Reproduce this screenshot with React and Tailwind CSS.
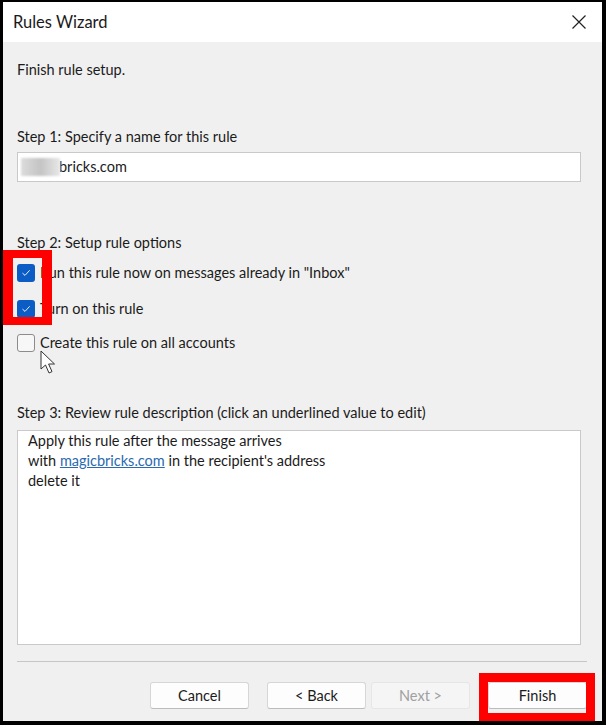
import React from "react";

const font = { fontFamily: "Lato, 'Noto Sans', sans-serif" };

function Check({ checked }) {
  if (checked) {
    return (
      <div className="w-[18px] h-[18px] rounded-[3px] bg-[#0b5cc4] flex items-center justify-center shrink-0">
        <svg width="12" height="12" viewBox="0 0 12 12" fill="none">
          <path d="M2.8 6.4 L5 8.4 L9.4 3.6" stroke="white" strokeWidth="0.9" strokeLinecap="round" strokeLinejoin="round" />
        </svg>
      </div>
    );
  }
  return <div className="w-[18px] h-[18px] rounded-[3px] border border-[#8c8c8c] bg-[#f7f7f7] shrink-0" />;
}

function Btn({ children, disabled, className = "" }) {
  return (
    <div
      className={
        "w-[99px] h-[27px] rounded-[3px] flex items-center justify-center text-[14.5px] border " +
        (disabled
          ? "bg-[#f5f5f5] border-[#e6e6e6] text-[#a0a0a0]"
          : "bg-[#fdfdfd] border-[#d6d6d6] border-b-[#bcbcbc] text-[#1b1b1b]") +
        " " +
        className
      }
    >
      {children}
    </div>
  );
}

export default function App() {
  return (
    <div className="w-[606px] h-[725px] bg-black pt-[2px] pl-[3px] pr-[4px] pb-[4px]" style={font}>
      <div className="relative w-full h-full bg-[#f0f0f0] flex flex-col overflow-hidden">
        {/* title bar */}
        <div className="h-[40px] bg-white flex items-center justify-between pl-[10px] pr-[15px] shrink-0">
          <span className="text-[16.5px] text-[#1a1a1a]">Rules Wizard</span>
          <svg width="16" height="16" viewBox="0 0 16 16" fill="none">
            <path d="M1.5 1.5 L14.5 14.5 M14.5 1.5 L1.5 14.5" stroke="#222" strokeWidth="1.2" />
          </svg>
        </div>

        <div className="flex flex-col pl-[14px] pr-[18px] text-[14.5px] leading-[20px] text-[#1b1b1b]">
          <div className="mt-[18px]">Finish rule setup.</div>

          <div className="mt-[47px]">Step 1: Specify a name for this rule</div>
          <div className="mt-[5px] h-[30px] w-[564px] bg-white border border-[#c9c9c9] flex items-center pl-[3px]">
            <div className="w-[39px] h-[18px] bg-gradient-to-r from-[#dcdcdc] via-[#c4c4c4] to-[#e8e8e8] blur-[1px]" />
            <span className="-ml-[1px]">bricks.com</span>
          </div>

          <div className="mt-[51px]">Step 2: Setup rule options</div>
          <div className="mt-[10px] flex items-center gap-[5px] h-[20px]">
            <Check checked />
            <span>Run this rule now on messages already in "Inbox"</span>
          </div>
          <div className="mt-[16px] flex items-center gap-[5px] h-[20px]">
            <Check checked />
            <span>Turn on this rule</span>
          </div>
          <div className="mt-[14px] flex items-center gap-[5px] h-[20px]">
            <Check />
            <span>Create this rule on all accounts</span>
          </div>

          <div className="mt-[50px]">Step 3: Review rule description (click an underlined value to edit)</div>
          <div className="mt-[7px] h-[215px] w-[564px] bg-white border border-[#c9c9c9] pl-[10px]">
            <div>Apply this rule after the message arrives</div>
            <div>
              with <span className="text-[#2a6ab0] underline">magicbricks.com</span> in the recipient's address
            </div>
            <div>delete it</div>
          </div>

          <div className="mt-[16px] h-px w-[570px] bg-[#c6c6c6]" />

          <div className="mt-[20px] flex justify-end w-[570px]">
            <Btn>Cancel</Btn>
            <Btn className="ml-[18px]">&lt; Back</Btn>
            <Btn disabled className="ml-[5px]">Next &gt;</Btn>
            <Btn className="ml-[18px]">Finish</Btn>
          </div>
        </div>

        {/* cursor */}
        <svg className="absolute left-[37px] top-[348px]" width="19" height="25" viewBox="0 0 19 25">
          <path d="M1 1 L1 19 L5.5 15 L9 23 L12 21.6 L8.6 14 L14.5 14 Z" fill="white" stroke="#333" strokeWidth="1" strokeLinejoin="round" />
        </svg>

        {/* annotation boxes */}
        <div className="absolute left-[0px] top-[248px] w-[49px] h-[75px] border-x-[10px] border-y-[8px] border-[#ff0000]" />
        <div className="absolute left-[476px] top-[671px] w-[116px] h-[49px] border-[9px] border-[#ff0000]" />
      </div>
    </div>
  );
}
